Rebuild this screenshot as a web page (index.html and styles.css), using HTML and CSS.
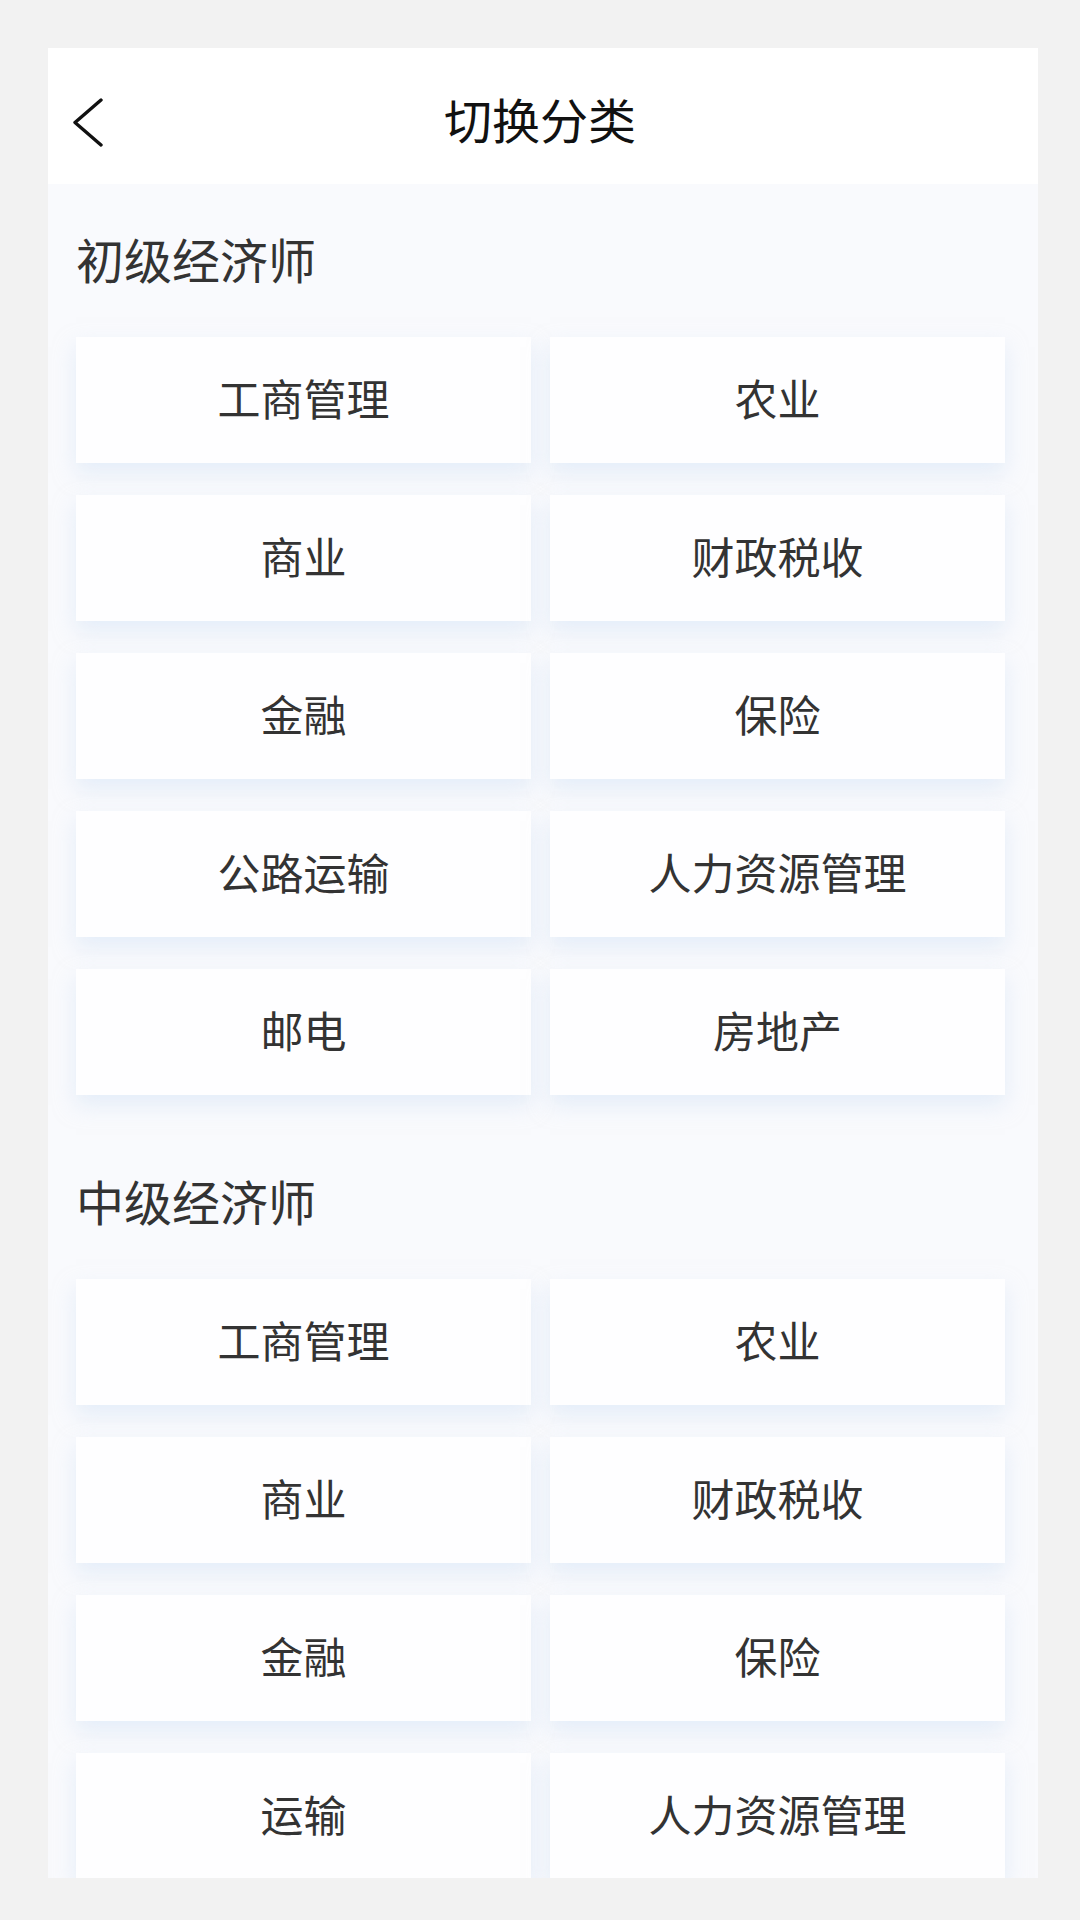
FILE: index.html
```html
<!DOCTYPE html>
<html>
<head>
    <meta charset="UTF-8">
    <title>切换分类</title>
    <link rel="stylesheet" href="styles.css">
</head>
<body>
    <div class="page">
        <div class="header">
            <a class="back" href="#">
                <svg width="32" height="50" viewBox="0 0 32 50">
                    <path d="M29 2 L3 24.5 L29 47" fill="none" stroke="#111" stroke-width="3.4" stroke-linecap="round" stroke-linejoin="round"/>
                </svg>
            </a>
            <h1 class="title">切换分类</h1>
            <span></span>
        </div>

        <div class="content">
            <div class="section">
                <h2 class="section-title">初级经济师</h2>
                <div class="grid">
                    <div class="item">工商管理</div>
                    <div class="item">农业</div>
                    <div class="item">商业</div>
                    <div class="item">财政税收</div>
                    <div class="item">金融</div>
                    <div class="item">保险</div>
                    <div class="item">公路运输</div>
                    <div class="item">人力资源管理</div>
                    <div class="item">邮电</div>
                    <div class="item">房地产</div>
                </div>
            </div>

            <div class="section">
                <h2 class="section-title">中级经济师</h2>
                <div class="grid">
                    <div class="item">工商管理</div>
                    <div class="item">农业</div>
                    <div class="item">商业</div>
                    <div class="item">财政税收</div>
                    <div class="item">金融</div>
                    <div class="item">保险</div>
                    <div class="item">运输</div>
                    <div class="item">人力资源管理</div>
                </div>
            </div>
        </div>
    </div>
</body>
</html>
```

FILE: styles.css
```css
body {
    margin: 0;
    background-color: #f2f2f2;
    font-family: "Noto Sans CJK SC", "Noto Sans", sans-serif;
}

.page {
    margin: 48px 0 0 48px;
    width: 990px;
    height: 1830px;
    overflow: hidden;
    background-color: #f9fafd;
}

.header {
    display: grid;
    grid-template-columns: 1fr auto 1fr;
    align-items: center;
    height: 136px;
    padding: 12px 0 0 24px;
    box-sizing: border-box;
    background-color: #fff;
}

.back {
    display: flex;
    align-items: center;
    margin-top: 2px;
}

.title {
    margin: 0 0 8px -30px;
    font-size: 48px;
    font-weight: normal;
    color: #111;
    line-height: 64px;
}

.content {
    padding: 0 33px 0 28px;
}

.section {
    padding: 46px 0 31px;
}

.section-title {
    margin: -4px 0 47px;
    font-size: 48px;
    font-weight: normal;
    line-height: 64px;
    color: #333;
}

.grid {
    display: grid;
    grid-template-columns: 455px 455px;
    column-gap: 19px;
    row-gap: 32px;
}

.item {
    height: 126px;
    padding-bottom: 7px;
    box-sizing: border-box;
    display: flex;
    align-items: center;
    justify-content: center;
    background-color: #fefeff;
    font-size: 43px;
    color: #333;
    box-shadow: 0 10px 20px rgba(210, 225, 246, 0.5);
}
```
